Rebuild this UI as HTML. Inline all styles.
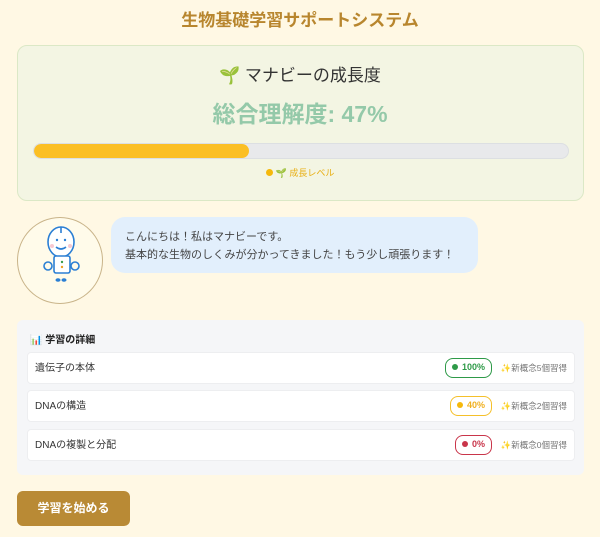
<!DOCTYPE html>
<html><head><meta charset="utf-8"><style>
*{margin:0;padding:0;box-sizing:border-box}
body{width:600px;height:537px;background:#fff8e4;font-family:"Liberation Sans","Noto Sans CJK JP",sans-serif;position:relative;overflow:hidden;color:#333}
.abs{position:absolute}
.title{left:0;width:600px;top:6px;text-align:center;font-size:17px;font-weight:bold;color:#b8862e}
.card{left:17px;top:45px;width:567px;height:156px;background:#f3f5e3;border:1px solid #dbe8c6;border-radius:10px}
.h2{left:0;width:600px;top:61px;text-align:center;font-size:17px;color:#333}
.pct{left:0;width:600px;top:95px;text-align:center;font-size:23px;font-weight:bold;color:#94c9a9}
.bar{left:33px;top:143px;width:536px;height:16px;background:#e8e9eb;border:1px solid #dcdfe2;border-radius:8px;overflow:hidden}
.fill{left:0;top:0;width:215px;height:100%;background:#fbbf24;border-radius:8px}
.leg{left:0;width:600px;top:166px;text-align:center;font-size:9px;color:#e8ae10}
.av{left:17px;top:217px;width:86px;height:87px;border:1.5px solid #c9b48a;border-radius:50%;background:#fffbea}
.bub{left:111px;top:217px;width:367px;height:56px;background:#e2effc;border-radius:14px;font-size:11px;line-height:18px;padding:11px 14px;color:#444}
.panel{left:17px;top:320px;width:567px;height:155px;background:#f5f6f8;border-radius:6px}
.ph{left:30px;top:331px;font-size:10px;font-weight:bold;color:#222}
.row{left:27px;width:548px;height:32px;background:#fff;border:1px solid #edeef0;border-radius:4px;font-size:10px;color:#333}
.row .n{position:absolute;left:7px;top:6px}
.badge{position:absolute;top:5px;height:20px;border:1.5px solid;border-radius:8px;font-size:9px;font-weight:bold;line-height:17px;padding:0 6px}
.badge b{display:inline-block;width:6px;height:6px;border-radius:50%;margin-right:4px;vertical-align:0}
.nw{position:absolute;right:7px;top:9px;font-size:8.5px;color:#777}
.btn{left:17px;top:491px;width:113px;height:35px;background:#b98a35;border-radius:6px;color:#fff;font-weight:bold;font-size:12px;text-align:center;line-height:35px}
</style></head><body>
<div class="abs title">生物基礎学習サポートシステム</div>
<div class="abs card"></div>
<div class="abs h2">🌱 マナビーの成長度</div>
<div class="abs pct">総合理解度: 47%</div>
<div class="abs bar"><div class="abs fill"></div></div>
<div class="abs leg"><span style="display:inline-block;width:7px;height:7px;border-radius:50%;background:#f5b80c;margin-right:3px"></span>🌱 成長レベル</div>
<div class="abs av"></div>
<svg class="abs" style="left:30px;top:222px" width="60" height="80" viewBox="0 0 60 80">
<g fill="none" stroke="#2b7fd4" stroke-width="1.6">
<ellipse cx="31" cy="20" rx="13" ry="15" fill="#fff"/>
<line x1="31" y1="5" x2="31" y2="11"/>
<path d="M26 25q5 4 10 0"/>
<rect x="24" y="34" width="16" height="17" rx="2" fill="#fff"/>
<circle cx="18" cy="44" r="4"/><circle cx="45" cy="44" r="4"/>
</g>
<circle cx="27" cy="18" r="1.2" fill="#2b7fd4"/><circle cx="35" cy="18" r="1.2" fill="#2b7fd4"/>
<circle cx="22" cy="24" r="2" fill="#f7c8d0"/><circle cx="40" cy="24" r="2" fill="#f7c8d0"/>
<circle cx="32" cy="40" r="1.2" fill="#3a9c4a"/><circle cx="32" cy="45" r="1.2" fill="#f0a020"/>
<ellipse cx="28" cy="58" rx="2.5" ry="1.8" fill="#2b7fd4"/><ellipse cx="34" cy="58" rx="2.5" ry="1.8" fill="#2b7fd4"/>
</svg>
<div class="abs bub">こんにちは！私はマナビーです。<br>基本的な生物のしくみが分かってきました！もう少し頑張ります！</div>
<div class="abs panel"></div>
<div class="abs ph">📊 学習の詳細</div>
<div class="abs row" style="top:352px"><span class="n">遺伝子の本体</span><span class="badge" style="right:82px;border-color:#2e9a48;color:#2e9a48"><b style="background:#2e9a48"></b>100%</span><span class="nw">✨新概念5個習得</span></div>
<div class="abs row" style="top:390px"><span class="n">DNAの構造</span><span class="badge" style="right:82px;border-color:#f5c02a;color:#f0b020"><b style="background:#f5b80c"></b>40%</span><span class="nw">✨新概念2個習得</span></div>
<div class="abs row" style="top:429px"><span class="n">DNAの複製と分配</span><span class="badge" style="right:82px;border-color:#c9354a;color:#c9354a"><b style="background:#c9354a"></b>0%</span><span class="nw">✨新概念0個習得</span></div>
<div class="abs btn">学習を始める</div>
</body></html>
